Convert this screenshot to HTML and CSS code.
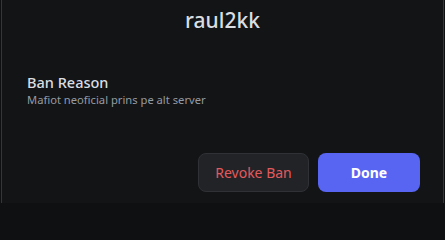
FILE: index.html
```html
<!DOCTYPE html>
<html>
<head>
<meta charset="utf-8">
<link rel="stylesheet" href="styles.css">
</head>
<body>
<div class="modal">
  <h1 class="title">raul2kk</h1>
  <div class="reason">
    <div class="reason-label">Ban Reason</div>
    <div class="reason-text">Mafiot neoficial prins pe alt server</div>
  </div>
  <div class="actions">
    <button class="btn btn-revoke">Revoke Ban</button>
    <button class="btn btn-done">Done</button>
  </div>
</div>
</body>
</html>
```
FILE: styles.css
```css
html, body {
  margin: 0;
  padding: 0;
  background: #0f1012;
}
body {
  width: 445px;
  height: 203px;
  overflow: hidden;
  font-family: "Noto Sans", "Open Sans", sans-serif;
}
.modal {
  box-sizing: border-box;
  margin: 0 1px;
  height: 203px;
  background: #131416;
  border-left: 1px solid #34363b;
  border-right: 1px solid #34363b;
  display: flex;
  flex-direction: column;
}
.title {
  margin: 0;
  padding-top: 7px;
  text-align: center;
  font-size: 21px;
  line-height: 26px;
  font-weight: 500;
  color: #dbdee1;
}
.reason {
  margin-top: 40px;
  padding-left: 25px;
}
.reason-label {
  font-size: 14.5px;
  line-height: 18px;
  font-weight: 500;
  color: #dbdee1;
}
.reason-text {
  margin-top: 1px;
  font-size: 11.2px;
  line-height: 15px;
  color: #949ba4;
}
.actions {
  margin-top: auto;
  margin-bottom: 11px;
  padding-right: 23px;
  display: flex;
  justify-content: flex-end;
  gap: 9px;
}
.btn {
  box-sizing: border-box;
  height: 39px;
  border-radius: 8px;
  font-family: inherit;
  font-size: 14px;
  cursor: pointer;
}
.btn-revoke {
  width: 111px;
  background: #222327;
  border: 1px solid #303136;
  color: #e25a5d;
  font-weight: 400;
}
.btn-done {
  width: 102px;
  background: #5865f2;
  border: none;
  color: #ffffff;
  font-weight: 700;
}
```
